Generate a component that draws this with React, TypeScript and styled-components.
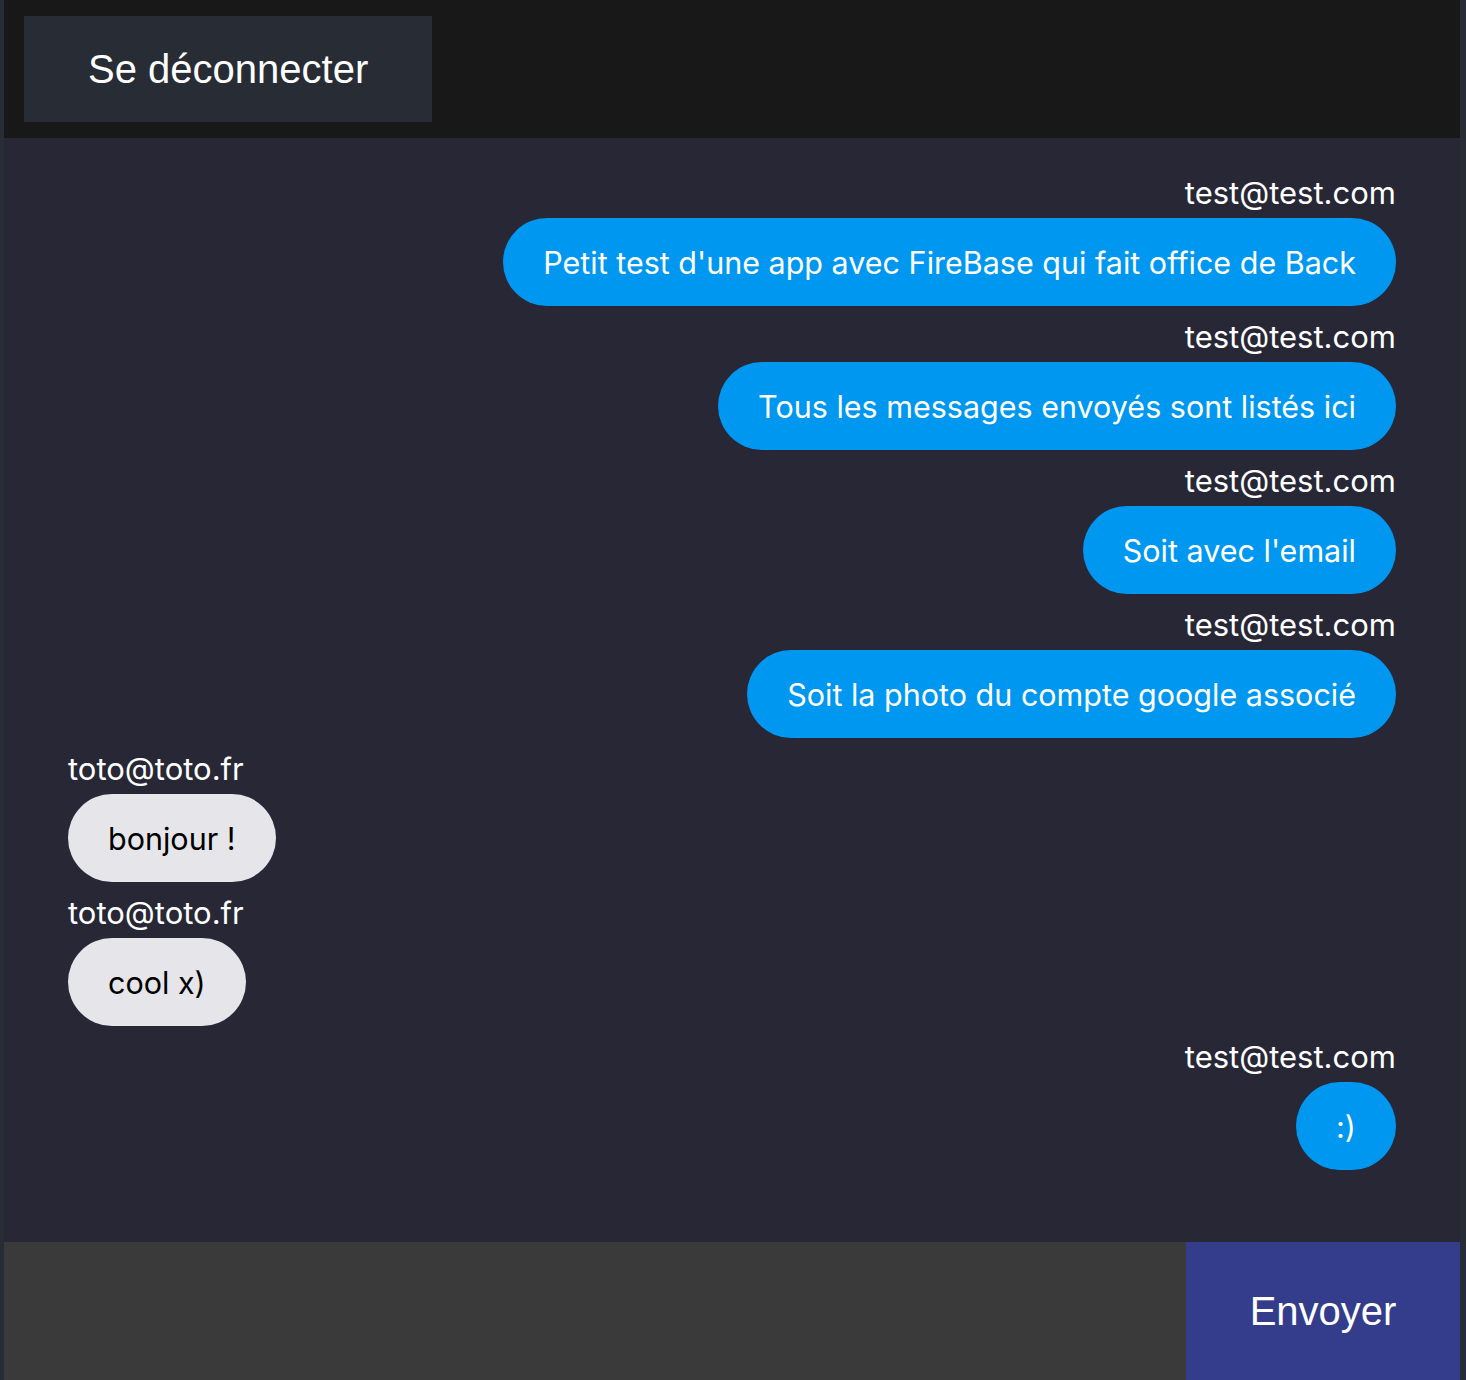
import React from "react";
import styled, { createGlobalStyle } from "styled-components";

const GlobalStyle = createGlobalStyle`
  html, body {
    margin: 0;
    padding: 0;
    background: #282c34;
  }
  * { box-sizing: border-box; }
`;

const Shell = styled.div`
  margin-left: 4px;
  width: 1456px;
  display: flex;
  flex-direction: column;
`;

const Header = styled.header`
  height: 138px;
  background: #181818;
  padding: 16px 20px;
  display: flex;
  align-items: flex-start;
`;

const LogoutButton = styled.button`
  height: 106px;
  padding: 0 64px;
  border: none;
  background: #282c34;
  color: #ffffff;
  font-family: "Liberation Sans", Arial, sans-serif;
  font-size: 40px;
  cursor: pointer;
`;

const Chat = styled.main`
  background: #272736;
  padding: 24px 64px 72px;
  display: flex;
  flex-direction: column;
`;

const Message = styled.div<{ $mine: boolean }>`
  display: flex;
  flex-direction: column;
  align-items: ${(p) => (p.$mine ? "flex-end" : "flex-start")};
`;

const Author = styled.div`
  height: 56px;
  line-height: 62px;
  overflow: visible;
  color: #ffffff;
  font-family: Inter, "Noto Sans", sans-serif;
  font-size: 31px;
`;

const Bubble = styled.div<{ $mine: boolean }>`
  height: 88px;
  padding: 0 40px;
  border-radius: 44px;
  display: flex;
  align-items: center;
  background: ${(p) => (p.$mine ? "#0097f0" : "#e5e5ea")};
  color: ${(p) => (p.$mine ? "#ffffff" : "#000000")};
  font-family: Inter, "Noto Sans", sans-serif;
  font-size: 30.5px;
  white-space: nowrap;
`;

const Footer = styled.form`
  height: 138px;
  display: flex;
`;

const Input = styled.input`
  flex: 1;
  border: none;
  outline: none;
  background: #3a3a3a;
  color: #ffffff;
  font-size: 30px;
  padding: 0 20px;
`;

const SendButton = styled.button`
  width: 274px;
  border: none;
  background: #333d8c;
  color: #ffffff;
  font-family: "Liberation Sans", Arial, sans-serif;
  font-size: 40px;
  cursor: pointer;
`;

const messages = [
  { author: "test@test.com", text: "Petit test d'une app avec FireBase qui fait office de Back", mine: true },
  { author: "test@test.com", text: "Tous les messages envoyés sont listés ici", mine: true },
  { author: "test@test.com", text: "Soit avec l'email", mine: true },
  { author: "test@test.com", text: "Soit la photo du compte google associé", mine: true },
  { author: "toto@toto.fr", text: "bonjour !", mine: false },
  { author: "toto@toto.fr", text: "cool x)", mine: false },
  { author: "test@test.com", text: ":)", mine: true },
];

export default function App() {
  return (
    <>
      <GlobalStyle />
      <Shell>
        <Header>
          <LogoutButton>Se déconnecter</LogoutButton>
        </Header>
        <Chat>
          {messages.map((m, i) => (
            <Message key={i} $mine={m.mine}>
              <Author>{m.author}</Author>
              <Bubble $mine={m.mine}>{m.text}</Bubble>
            </Message>
          ))}
        </Chat>
        <Footer onSubmit={(e) => e.preventDefault()}>
          <Input />
          <SendButton type="submit">Envoyer</SendButton>
        </Footer>
      </Shell>
    </>
  );
}
